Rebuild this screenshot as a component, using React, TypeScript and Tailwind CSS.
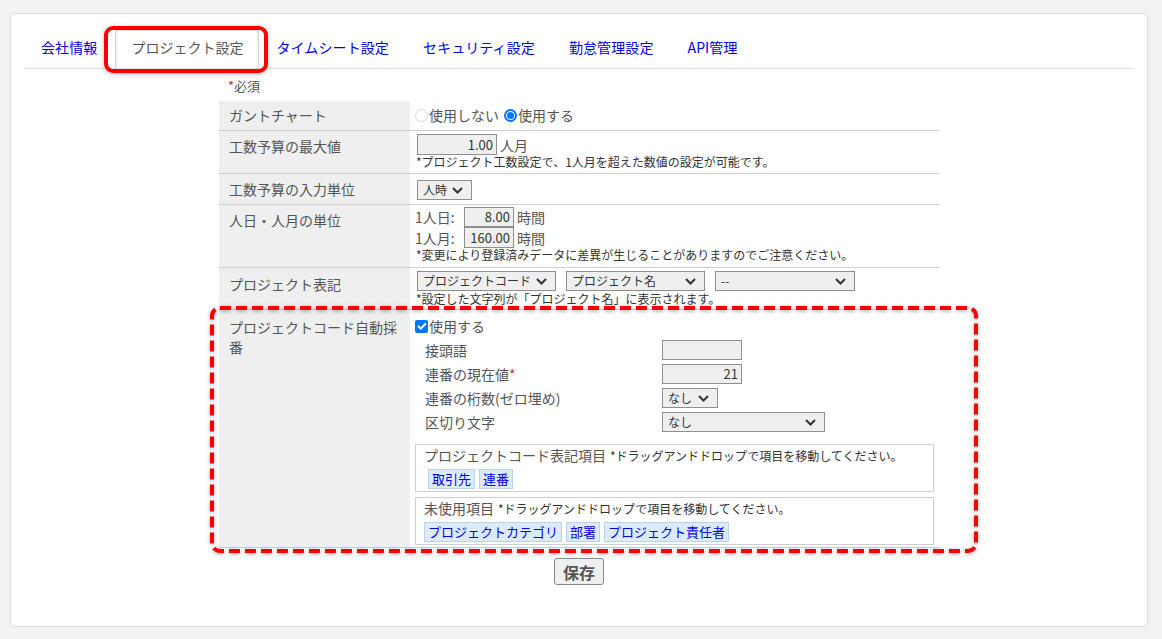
import React from 'react';

const tabs = ['会社情報', 'プロジェクト設定', 'タイムシート設定', 'セキュリティ設定', '勤怠管理設定', 'API管理'];

function Chevron() {
  return (
    <svg width="11" height="7" viewBox="0 0 11 7" className="shrink-0">
      <polyline points="1,1 5.5,5.5 10,1" fill="none" stroke="#333" strokeWidth="2" />
    </svg>
  );
}

function Field({ value, w, className = '' }: { value: string; w: string; className?: string }) {
  return (
    <span
      className={`inline-flex shrink-0 items-center justify-end border border-[#8f8f8f] bg-[#efefef] px-[3px] text-[13px] text-[#333] ${w} ${className}`}
    >
      {value}
    </span>
  );
}

function Select({ label, w, className = '' }: { label: string; w: string; className?: string }) {
  return (
    <span
      className={`inline-flex h-[20px] shrink-0 items-center justify-between border border-[#8f8f8f] bg-[#efefef] pl-[5px] pr-[8px] text-[12px] text-[#333] ${w} ${className}`}
    >
      <span className="whitespace-nowrap">{label}</span>
      <Chevron />
    </span>
  );
}

function Radio({ checked }: { checked?: boolean }) {
  if (checked) {
    return (
      <span className="mr-px inline-flex h-[13px] w-[13px] items-center justify-center rounded-full border-2 border-[#0075ff] bg-white">
        <span className="h-[7px] w-[7px] rounded-full bg-[#0075ff]" />
      </span>
    );
  }
  return <span className="mr-px inline-block h-[13px] w-[13px] rounded-full border border-[#d8d8d8] bg-white" />;
}

function Chip({ children }: { children: React.ReactNode }) {
  return (
    <span className="inline-flex h-[20px] items-center border border-[#b9d3ec] bg-[#dcebfb] px-[3px] text-[13px] text-[#0000ee]">
      {children}
    </span>
  );
}

function Row({ label, h, children, labelPad = 'pt-[5px]', className = '' }: {
  label: React.ReactNode;
  h: string;
  children: React.ReactNode;
  labelPad?: string;
  className?: string;
}) {
  return (
    <div className={`flex border-b border-[#d0d0d0] ${h} ${className}`}>
      <div className={`w-[191px] shrink-0 bg-[#efefef] pl-[10px] pr-[9px] text-[14px] leading-[20px] text-[#555] ${labelPad}`}>
        {label}
      </div>
      <div className="flex-1 bg-white pl-[5px] pr-[5px] text-[14px] leading-[20px] text-[#555]">{children}</div>
    </div>
  );
}

export default function App() {
  return (
    <div className="h-[639px] w-[1162px] overflow-hidden bg-[#f2f2f2] pt-[13px] font-['Noto_Sans_CJK_JP',sans-serif]">
      <div className="ml-[10px] h-[614px] w-[1138px] rounded-[4px] border border-[#dcdcdc] bg-white px-[13px] pt-[16px]">
        {/* tabs */}
        <ul className="flex border-b border-[#dcdcdc]">
          {tabs.map((t, i) =>
            i === 1 ? (
              <li
                key={t}
                className="relative ml-px flex h-[38px] items-center border border-b-0 border-[#d4d4d4] bg-white px-[15px] pb-[4px] text-[14px] text-[#555] shadow-[inset_2px_0_3px_-2px_rgba(0,0,0,0.15),inset_-2px_0_3px_-2px_rgba(0,0,0,0.15)]"
              >
                {t}
                <span className="pointer-events-none absolute -bottom-[5px] -left-[12px] -right-[10px] -top-[5px] rounded-[9px] border-[4px] border-[#ff0000] shadow-[0_1px_4px_rgba(0,0,0,0.3)]" />
              </li>
            ) : (
              <li key={t} className="flex h-[38px] items-center px-[17px] pb-[4px] text-[14px] tracking-[0.1px] text-[#0000ee]">
                {t}
              </li>
            )
          )}
        </ul>

        <div className="mx-auto w-[720px]">
          <div className="mb-[7px] mt-[9px] pl-[9px] text-[13px] leading-[16px] text-[#555]">
            <span className="text-[#c33]">*</span>必須
          </div>

          <Row label="ガントチャート" h="h-[30px]" labelPad="pt-[4px]">
            <div className="flex items-center pt-[4px]">
              <Radio />
              <span>使用しない</span>
              <span className="ml-[5px]" />
              <Radio checked />
              <span>使用する</span>
            </div>
          </Row>

          <Row label="工数予算の最大値" h="h-[43px]">
            <div className="pt-[3px]">
              <div className="flex items-center">
                <Field value="1.00" w="w-[80px] h-[21px]" className="ml-[2px]" />
                <span className="ml-[3px]">人月</span>
              </div>
              <div className="pl-px text-[12px] leading-[14px] text-[#333]">
                *プロジェクト工数設定で、1人月を超えた数値の設定が可能です。
              </div>
            </div>
          </Row>

          <Row label="工数予算の入力単位" h="h-[31px]">
            <div className="pt-[5px]">
              <Select label="人時" w="w-[55px]" className="ml-[2px]" />
            </div>
          </Row>

          <Row label="人日・人月の単位" h="h-[63px]">
            <div className="pt-[1px]">
              <div className="flex h-[21px] items-center">
                <span className="w-[49px] shrink-0 whitespace-nowrap">1人日:</span>
                <Field value="8.00" w="w-[50px] h-[20px]" />
                <span className="ml-[3px]">時間</span>
              </div>
              <div className="flex h-[21px] items-center">
                <span className="w-[49px] shrink-0 whitespace-nowrap">1人月:</span>
                <Field value="160.00" w="w-[50px] h-[21px]" />
                <span className="ml-[3px]">時間</span>
              </div>
              <div className="pl-px text-[12px] leading-[14px] text-[#333]">
                *変更により登録済みデータに差異が生じることがありますのでご注意ください。
              </div>
            </div>
          </Row>

          <Row label="プロジェクト表記" h="h-[42px]" labelPad="pt-[6px]">
            <div className="pt-[3px]">
              <div className="flex items-center gap-[10px] pl-[2px]">
                <Select label="プロジェクトコード" w="w-[139px]" />
                <Select label="プロジェクト名" w="w-[139px]" />
                <Select label="--" w="w-[140px]" />
              </div>
              <div className="mt-[1px] pl-px text-[12px] leading-[14px] text-[#333]">
                *設定した文字列が「プロジェクト名」に表示されます。
              </div>
            </div>
          </Row>

          <Row
            label="プロジェクトコード自動採番"
            h="h-[238px]"
            labelPad="pt-[7px]"
            className="relative"
          >
            <div className="pt-[6px]">
              <div className="flex h-[20px] items-center">
                <span className="mr-px inline-flex h-[13px] w-[13px] items-center justify-center rounded-[2px] bg-[#0075ff]">
                  <svg width="10" height="8" viewBox="0 0 10 8">
                    <polyline points="1,4 3.8,6.6 9,1.2" fill="none" stroke="#fff" strokeWidth="2" />
                  </svg>
                </span>
                <span>使用する</span>
              </div>
              <div className="mt-[2px]">
                <div className="flex h-[24px] items-center">
                  <span className="w-[247px] pl-[10px]">接頭語</span>
                  <Field value="" w="w-[80px] h-[20px]" />
                </div>
                <div className="flex h-[24px] items-center">
                  <span className="w-[247px] pl-[10px]">
                    連番の現在値<span className="text-[#c33]">*</span>
                  </span>
                  <Field value="21" w="w-[80px] h-[20px]" />
                </div>
                <div className="flex h-[24px] items-center">
                  <span className="w-[247px] pl-[10px]">連番の桁数(ゼロ埋め)</span>
                  <Select label="なし" w="w-[56px]" />
                </div>
                <div className="flex h-[24px] items-center">
                  <span className="w-[247px] pl-[10px]">区切り文字</span>
                  <Select label="なし" w="w-[163px]" />
                </div>
              </div>

              <div className="mt-[10px] h-[48px] border border-[#cfcfcf] pl-[8px]">
                <div className="flex items-baseline leading-[20px]">
                  <span className="text-[14px] text-[#555]">プロジェクトコード表記項目</span>
                  <span className="ml-[4px] text-[12px] text-[#333]">*ドラッグアンドドロップで項目を移動してください。</span>
                </div>
                <div className="mt-[3px] flex gap-[4px] pl-[4px]">
                  <Chip>取引先</Chip>
                  <Chip>連番</Chip>
                </div>
              </div>

              <div className="mt-[5px] h-[48px] border border-[#cfcfcf] pl-[8px]">
                <div className="flex items-baseline leading-[20px]">
                  <span className="text-[14px] text-[#555]">未使用項目</span>
                  <span className="ml-[4px] text-[12px] text-[#333]">*ドラッグアンドドロップで項目を移動してください。</span>
                </div>
                <div className="mt-[3px] flex gap-[4px]">
                  <Chip>プロジェクトカテゴリ</Chip>
                  <Chip>部署</Chip>
                  <Chip>プロジェクト責任者</Chip>
                </div>
              </div>
            </div>

            {/* annotation overlay */}
            <svg
              width="768"
              height="247"
              className="pointer-events-none absolute -left-[9px] -top-[4px] drop-shadow-[0_1px_2px_rgba(0,0,0,0.35)]"
            >
              <rect
                x="2"
                y="2"
                width="764"
                height="243"
                rx="8"
                fill="none"
                stroke="#ff0000"
                strokeWidth="4"
                strokeDasharray="11 5"
              />
            </svg>
          </Row>

          <div className="mt-[10px] flex justify-center">
            <button className="h-[27px] w-[50px] rounded-[3px] border border-[#888] bg-[#efefef] text-[16px] font-bold leading-none text-[#555]">
              保存
            </button>
          </div>
        </div>
      </div>
    </div>
  );
}
